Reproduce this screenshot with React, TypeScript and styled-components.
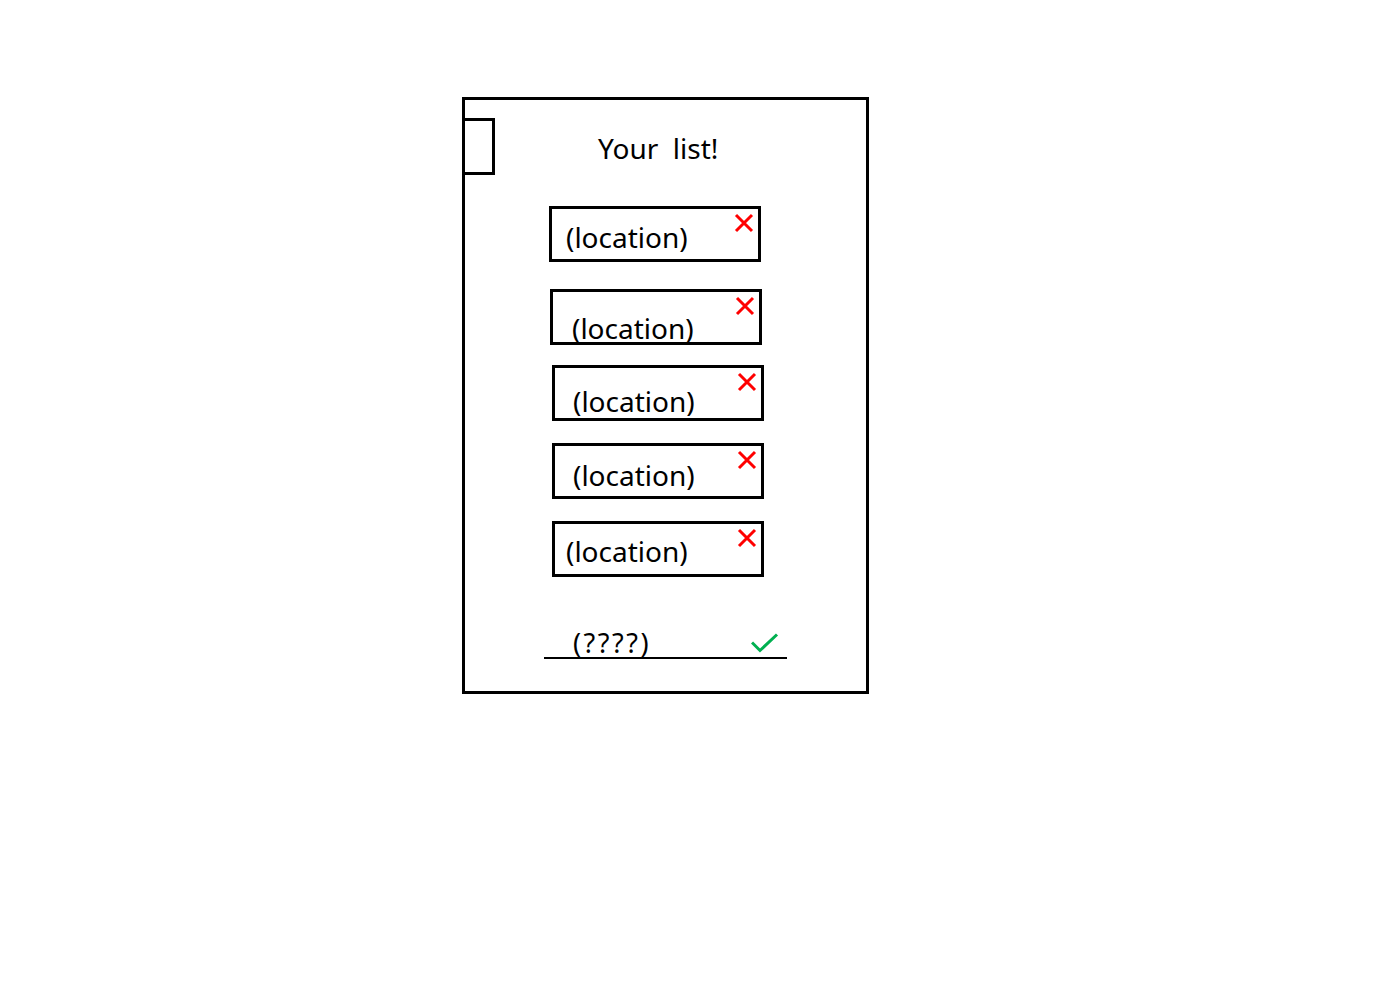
import styled, { createGlobalStyle } from "styled-components"

const GlobalStyle = createGlobalStyle`
    body {
        margin: 0;
        background: #ffffff;
        font-family: "Noto Sans", "Open Sans", sans-serif;
        color: #000000;
    }
`

type Place = { shift: number; top: number; pad: number; down: number }

const places: Place[] = [
    { shift: 84, top: 31, pad: 14, down: 14 },
    { shift: 85, top: 27, pad: 19, down: 22 },
    { shift: 87, top: 20, pad: 18, down: 19 },
    { shift: 87, top: 22, pad: 18, down: 15 },
    { shift: 87, top: 22, pad: 11, down: 13 },
]

const CrossIcon = () => (
    <svg width="20" height="20" viewBox="0 0 20 20">
        <path d="M2 2 L18 18 M18 2 L2 18" stroke="#ff0000" strokeWidth="3" fill="none" />
    </svg>
)

const CheckIcon = () => (
    <svg width="28" height="20" viewBox="0 0 28 20">
        <path d="M1 9.5 L9 17.5 L26 1.5" stroke="#00b050" strokeWidth="3" fill="none" />
    </svg>
)

export default function App() {
    return (
        <Page>
            <GlobalStyle />
            <Frame>
                <Header>
                    <Tab />
                    <Title>Your&nbsp; list!</Title>
                </Header>
                {places.map((p, i) => (
                    <LocationBox key={i} $shift={p.shift} $top={p.top}>
                        <LocationText $pad={p.pad} $down={p.down}>(location)</LocationText>
                        <Remove>
                            <CrossIcon />
                        </Remove>
                    </LocationBox>
                ))}
                <NewEntry>
                    <EntryText>(????)</EntryText>
                    <Confirm>
                        <CheckIcon />
                    </Confirm>
                </NewEntry>
            </Frame>
        </Page>
    )
}

const Page = styled.div`
    padding: 97px 0 0 462px;
`
const Frame = styled.div`
    box-sizing: border-box;
    width: 407px;
    height: 597px;
    border: 3px solid #000;
    display: flex;
    flex-direction: column;
`
const Header = styled.div`
    display: flex;
    align-items: center;
    margin-top: 18px;
    height: 57px;
`
const Tab = styled.div`
    box-sizing: border-box;
    width: 33px;
    height: 57px;
    margin-left: -3px;
    border: 3px solid #000;
`
const Title = styled.h1`
    margin: 0 0 0 103px;
    font-size: 28px;
    font-weight: 400;
    line-height: 1;
    padding-top: 2px;
`
const LocationBox = styled.div<{ $shift: number; $top: number }>`
    position: relative;
    box-sizing: border-box;
    width: 212px;
    height: 56px;
    margin: ${(p) => p.$top}px 0 0 ${(p) => p.$shift}px;
    border: 3px solid #000;
    overflow: hidden;
`
const LocationText = styled.span<{ $pad: number; $down: number }>`
    display: block;
    padding: ${(p) => p.$down}px 0 0 ${(p) => p.$pad}px;
    font-size: 28px;
    line-height: 28px;
    white-space: nowrap;
`
const Remove = styled.span`
    position: absolute;
    top: 4px;
    right: 4px;
    display: flex;
`
const NewEntry = styled.div`
    display: flex;
    align-items: flex-end;
    justify-content: space-between;
    width: 243px;
    margin: 52px 0 0 79px;
    border-bottom: 2px solid #000;
`
const EntryText = styled.span`
    margin-left: 29px;
    font-size: 27px;
    line-height: 27px;
    letter-spacing: 2.5px;
    padding-bottom: 1px;
`
const Confirm = styled.span`
    display: flex;
    margin: 0 8px 4px 0;
`
